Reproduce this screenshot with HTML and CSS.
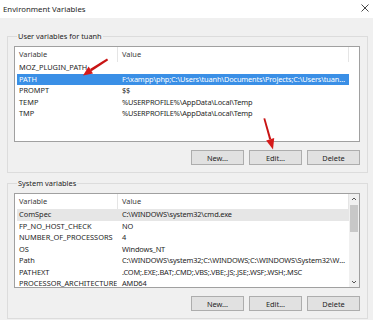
FILE: index.html
```html
<!DOCTYPE html>
<html lang="en">
<head>
    <meta charset="UTF-8">
    <title>Environment Variables</title>
    <link rel="stylesheet" href="styles.css">
</head>
<body>
    <div class="window">
        <div class="titlebar">
            <span class="title">Environment Variables</span>
            <svg class="close" width="8" height="8" viewBox="0 0 8 8">
                <path d="M0.5 0.5 L7.5 7.5 M7.5 0.5 L0.5 7.5" stroke="#333" stroke-width="0.9" fill="none"/>
            </svg>
        </div>

        <div class="content">
            <div class="group">
                <div class="group-label">User variables for tuanh</div>
                <div class="list">
                    <div class="list-main">
                        <div class="list-head">
                            <div class="col-var">Variable</div>
                            <div class="col-val">Value</div>
                        </div>
                        <div class="row"><div class="col-var">MOZ_PLUGIN_PATH</div><div class="col-val"></div></div>
                        <div class="row selected"><div class="col-var">PATH</div><div class="col-val">F:\xampp\php;C:\Users\tuanh\Documents\Projects;C:\Users\tuanh...</div></div>
                        <div class="row"><div class="col-var">PROMPT</div><div class="col-val">$$</div></div>
                        <div class="row"><div class="col-var">TEMP</div><div class="col-val">%USERPROFILE%\AppData\Local\Temp</div></div>
                        <div class="row"><div class="col-var">TMP</div><div class="col-val">%USERPROFILE%\AppData\Local\Temp</div></div>
                    </div>
                </div>
                <div class="buttons">
                    <button class="btn">New...</button>
                    <button class="btn">Edit...</button>
                    <button class="btn">Delete</button>
                </div>
            </div>

            <div class="group system">
                <div class="group-label">System variables</div>
                <div class="list short">
                    <div class="list-main">
                        <div class="list-head">
                            <div class="col-var">Variable</div>
                            <div class="col-val">Value</div>
                        </div>
                        <div class="row inactive"><div class="col-var">ComSpec</div><div class="col-val">C:\WINDOWS\system32\cmd.exe</div></div>
                        <div class="row"><div class="col-var">FP_NO_HOST_CHECK</div><div class="col-val">NO</div></div>
                        <div class="row"><div class="col-var">NUMBER_OF_PROCESSORS</div><div class="col-val">4</div></div>
                        <div class="row"><div class="col-var">OS</div><div class="col-val">Windows_NT</div></div>
                        <div class="row"><div class="col-var">Path</div><div class="col-val">C:\WINDOWS\system32;C:\WINDOWS;C:\WINDOWS\System32\Wb...</div></div>
                        <div class="row"><div class="col-var">PATHEXT</div><div class="col-val">.COM;.EXE;.BAT;.CMD;.VBS;.VBE;.JS;.JSE;.WSF;.WSH;.MSC</div></div>
                        <div class="row"><div class="col-var">PROCESSOR_ARCHITECTURE</div><div class="col-val">AMD64</div></div>
                    </div>
                    <div class="scrollbar">
                        <svg class="sb-arrow" width="10" height="10" viewBox="0 0 10 10">
                            <path d="M3 6 L5 4 L7 6" stroke="#555" stroke-width="1" fill="none"/>
                        </svg>
                        <div class="sb-thumb"></div>
                        <div class="sb-track"></div>
                        <svg class="sb-arrow" width="10" height="10" viewBox="0 0 10 10">
                            <path d="M3 4 L5 6 L7 4" stroke="#555" stroke-width="1" fill="none"/>
                        </svg>
                    </div>
                </div>
                <div class="buttons">
                    <button class="btn">New...</button>
                    <button class="btn">Edit...</button>
                    <button class="btn">Delete</button>
                </div>
            </div>
        </div>

        <!-- red arrows drawn over the dialog -->
        <svg class="arrows" width="373" height="320" viewBox="0 0 373 320">
            <path d="M107 58.5 L108.2 60.2 L91.5 71.2 L90 69 Z" fill="#c81414"/>
            <path d="M83 75.5 L93 73.4 L88.6 66.6 Z" fill="#d61a1a"/>
            <path d="M263.4 118.5 L265.2 118.3 L271.2 139 L269.2 139.6 Z" fill="#c81414"/>
            <path d="M273 149.5 L274.2 138 L266.2 140.4 Z" fill="#d61a1a"/>
        </svg>
    </div>
</body>
</html>
```

FILE: styles.css
```css
body {
    margin: 0;
    padding: 0;
    background-color: #f0f0f0;
    font-family: "Noto Sans", "Open Sans", sans-serif;
    font-size: 7.4px;
    color: #1e1e1e;
}
.window {
    position: relative;
    width: 373px;
    height: 320px;
    overflow: hidden;
    background-color: #f0f0f0;
}
.titlebar {
    height: 18px;
    background-color: #fff;
    display: flex;
    align-items: center;
    justify-content: space-between;
    padding: 0 4px 0 3px;
}
.title {
    font-size: 7.8px;
}
.close {
    margin-top: -2px;
}
.content {
    padding: 0 5px 0 7px;
}
.group {
    margin-top: 18px;
    border: 1px solid #dcdcdc;
    padding: 0 7px 7px 6px;
}
.group.system {
    margin-top: 10px;
}
.group-label {
    width: fit-content;
    margin: -6px 0 0 3px;
    padding: 0 1px;
    height: 11px;
    line-height: 11px;
    background-color: #f0f0f0;
}
.list {
    margin-top: 4px;
    height: 94px;
    border: 1px solid #a0a0a0;
    background-color: #fff;
    display: flex;
}
.list.short {
    height: 93px;
}
.list-main {
    width: 334px;
    flex: none;
    overflow: hidden;
}
.list-head {
    display: flex;
    height: 15px;
    line-height: 15px;
    color: #3a3a3a;
}
.list-head .col-var {
    width: 98px;
    padding-left: 4px;
    border-right: 1px solid #e5e5e5;
}
.list-head .col-val {
    flex: 1;
    padding-left: 4px;
    border-right: 1px solid #e5e5e5;
}
.row {
    display: flex;
    height: 11.5px;
    line-height: 11.5px;
    margin-left: 2px;
    white-space: nowrap;
}
.row .col-var {
    width: 98px;
    padding-left: 2px;
    flex: none;
    overflow: hidden;
}
.row .col-val {
    flex: 1;
    min-width: 0;
    padding-left: 5px;
    letter-spacing: -0.15px;
    overflow: hidden;
    text-overflow: ellipsis;
}
.row.selected {
    background-color: #3a8fe6;
    color: #fff;
}
.row.inactive {
    background-color: #e6e6e6;
}
.scrollbar {
    width: 10px;
    display: flex;
    flex-direction: column;
    background-color: #f0f0f0;
}
.sb-arrow {
    display: block;
    flex: none;
}
.sb-thumb {
    height: 27px;
    margin: 1px 1px 0 1px;
    background-color: #c8c8c8;
}
.sb-track {
    flex: 1;
}
.buttons {
    display: flex;
    justify-content: flex-end;
    gap: 5px;
    margin-top: 8px;
}
.btn {
    width: 53px;
    height: 15px;
    padding: 0;
    font-family: "Noto Sans", "Open Sans", sans-serif;
    font-size: 7.4px;
    color: #1e1e1e;
    background-color: #e1e1e1;
    border: 1px solid #adadad;
}
.arrows {
    position: absolute;
    left: 0;
    top: 0;
    pointer-events: none;
}
```
